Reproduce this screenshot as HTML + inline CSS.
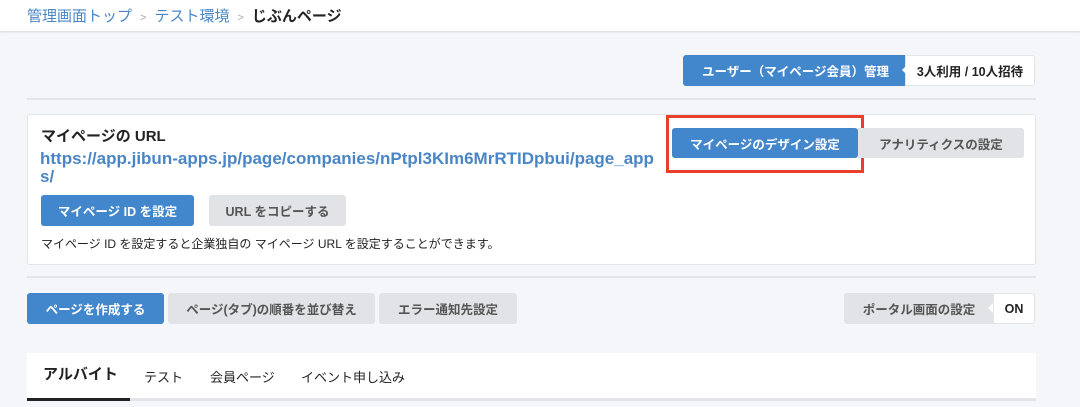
<!DOCTYPE html>
<html><head><meta charset="utf-8"><style>
*{margin:0;padding:0;box-sizing:border-box}
body{width:1080px;height:407px;background:#f5f6fa;font-family:"Liberation Sans","Noto Sans CJK JP",sans-serif;position:relative;overflow:hidden;color:#222}
.a{position:absolute}
.hdr{left:0;top:0;width:1080px;height:31px;background:#fff;box-shadow:0 1px 2px #d8d9de}
.bc{left:27px;top:5px;font-size:15px;color:#4a86c5}
.bc b{color:#222}
.bc i{font-style:normal;color:#aaa;font-size:11px;margin:0 8px}
.line{height:2px;background:#e3e4e8}
.btn{position:absolute;border-radius:3px;font-size:12.5px;font-weight:bold;display:flex;align-items:center;justify-content:center}
.bl{background:#4286cc;color:#fff}
.gr{background:#e2e3e6;color:#555}
</style></head><body>
<div class="a hdr"></div>
<div class="a bc">管理画面トップ<i>&gt;</i>テスト環境<i>&gt;</i><b>じぶんページ</b></div>
<div class="btn bl" style="left:683px;top:55px;width:225px;height:31px;border-radius:3px 0 0 3px">ユーザー（マイページ会員）管理</div>
<div class="btn" style="left:905px;top:55px;width:130px;height:31px;background:#fff;border:1px solid #e3e4e8;color:#222;border-radius:0 3px 3px 0">3人利用 / 10人招待</div>
<div class="a" style="left:902px;top:65px;width:0;height:0;border:5px solid transparent;border-right-color:#fff;border-left:0"></div>
<div class="a line" style="left:27px;top:98px;width:1009px"></div>
<div class="a" style="left:27px;top:114px;width:1009px;height:151px;background:#fff;border:1px solid #e3e4e8;border-radius:3px"></div>
<div class="a" style="left:41px;top:125px;font-size:15px;font-weight:bold">マイページの URL</div>
<div class="a" style="left:40px;top:150px;width:625px;font-size:17px;font-weight:bold;color:#4a86c5;line-height:18px;word-break:break-all">https://app.jibun-apps.jp/page/companies/nPtpl3KIm6MrRTIDpbui/page_apps/</div>
<div class="btn bl" style="left:41px;top:195px;width:153px;height:31px">マイページ ID を設定</div>
<div class="btn gr" style="left:209px;top:195px;width:137px;height:31px">URL をコピーする</div>
<div class="a" style="left:41px;top:235px;font-size:12px">マイページ ID を設定すると企業独自の マイページ URL を設定することができます。</div>
<div class="a" style="left:666px;top:115px;width:198px;height:58px;border:3px solid #e8402a"></div>
<div class="btn bl" style="left:672px;top:128px;width:186px;height:30px">マイページのデザイン設定</div>
<div class="btn gr" style="left:858px;top:128px;width:166px;height:30px;border-radius:0 3px 3px 0">アナリティクスの設定</div>
<div class="a line" style="left:27px;top:276px;width:1009px"></div>
<div class="btn bl" style="left:27px;top:293px;width:137px;height:31px">ページを作成する</div>
<div class="btn gr" style="left:168px;top:293px;width:207px;height:31px">ページ(タブ)の順番を並び替え</div>
<div class="btn gr" style="left:379px;top:293px;width:138px;height:31px">エラー通知先設定</div>
<div class="btn gr" style="left:844px;top:293px;width:150px;height:31px;border-radius:3px 0 0 3px">ポータル画面の設定</div>
<div class="btn" style="left:993px;top:293px;width:42px;height:31px;background:#fff;border:1px solid #e3e4e8;border-radius:0 3px 3px 0;color:#222">ON</div>
<div class="a" style="left:988px;top:303px;width:0;height:0;border:5px solid transparent;border-right-color:#fff;border-left:0"></div>
<div class="a" style="left:27px;top:353px;width:1009px;height:47px;background:#fff"></div>
<div class="a line" style="left:27px;top:398px;width:1009px;height:3px"></div>
<div class="a" style="left:27px;top:398px;width:103px;height:3px;background:#222"></div>
<div class="a" style="left:43px;top:363px;font-size:15px;font-weight:bold">アルバイト</div>
<div class="a" style="left:144px;top:367px;font-size:13px">テスト</div>
<div class="a" style="left:210px;top:367px;font-size:13px">会員ページ</div>
<div class="a" style="left:301px;top:367px;font-size:13px">イベント申し込み</div>
</body></html>
